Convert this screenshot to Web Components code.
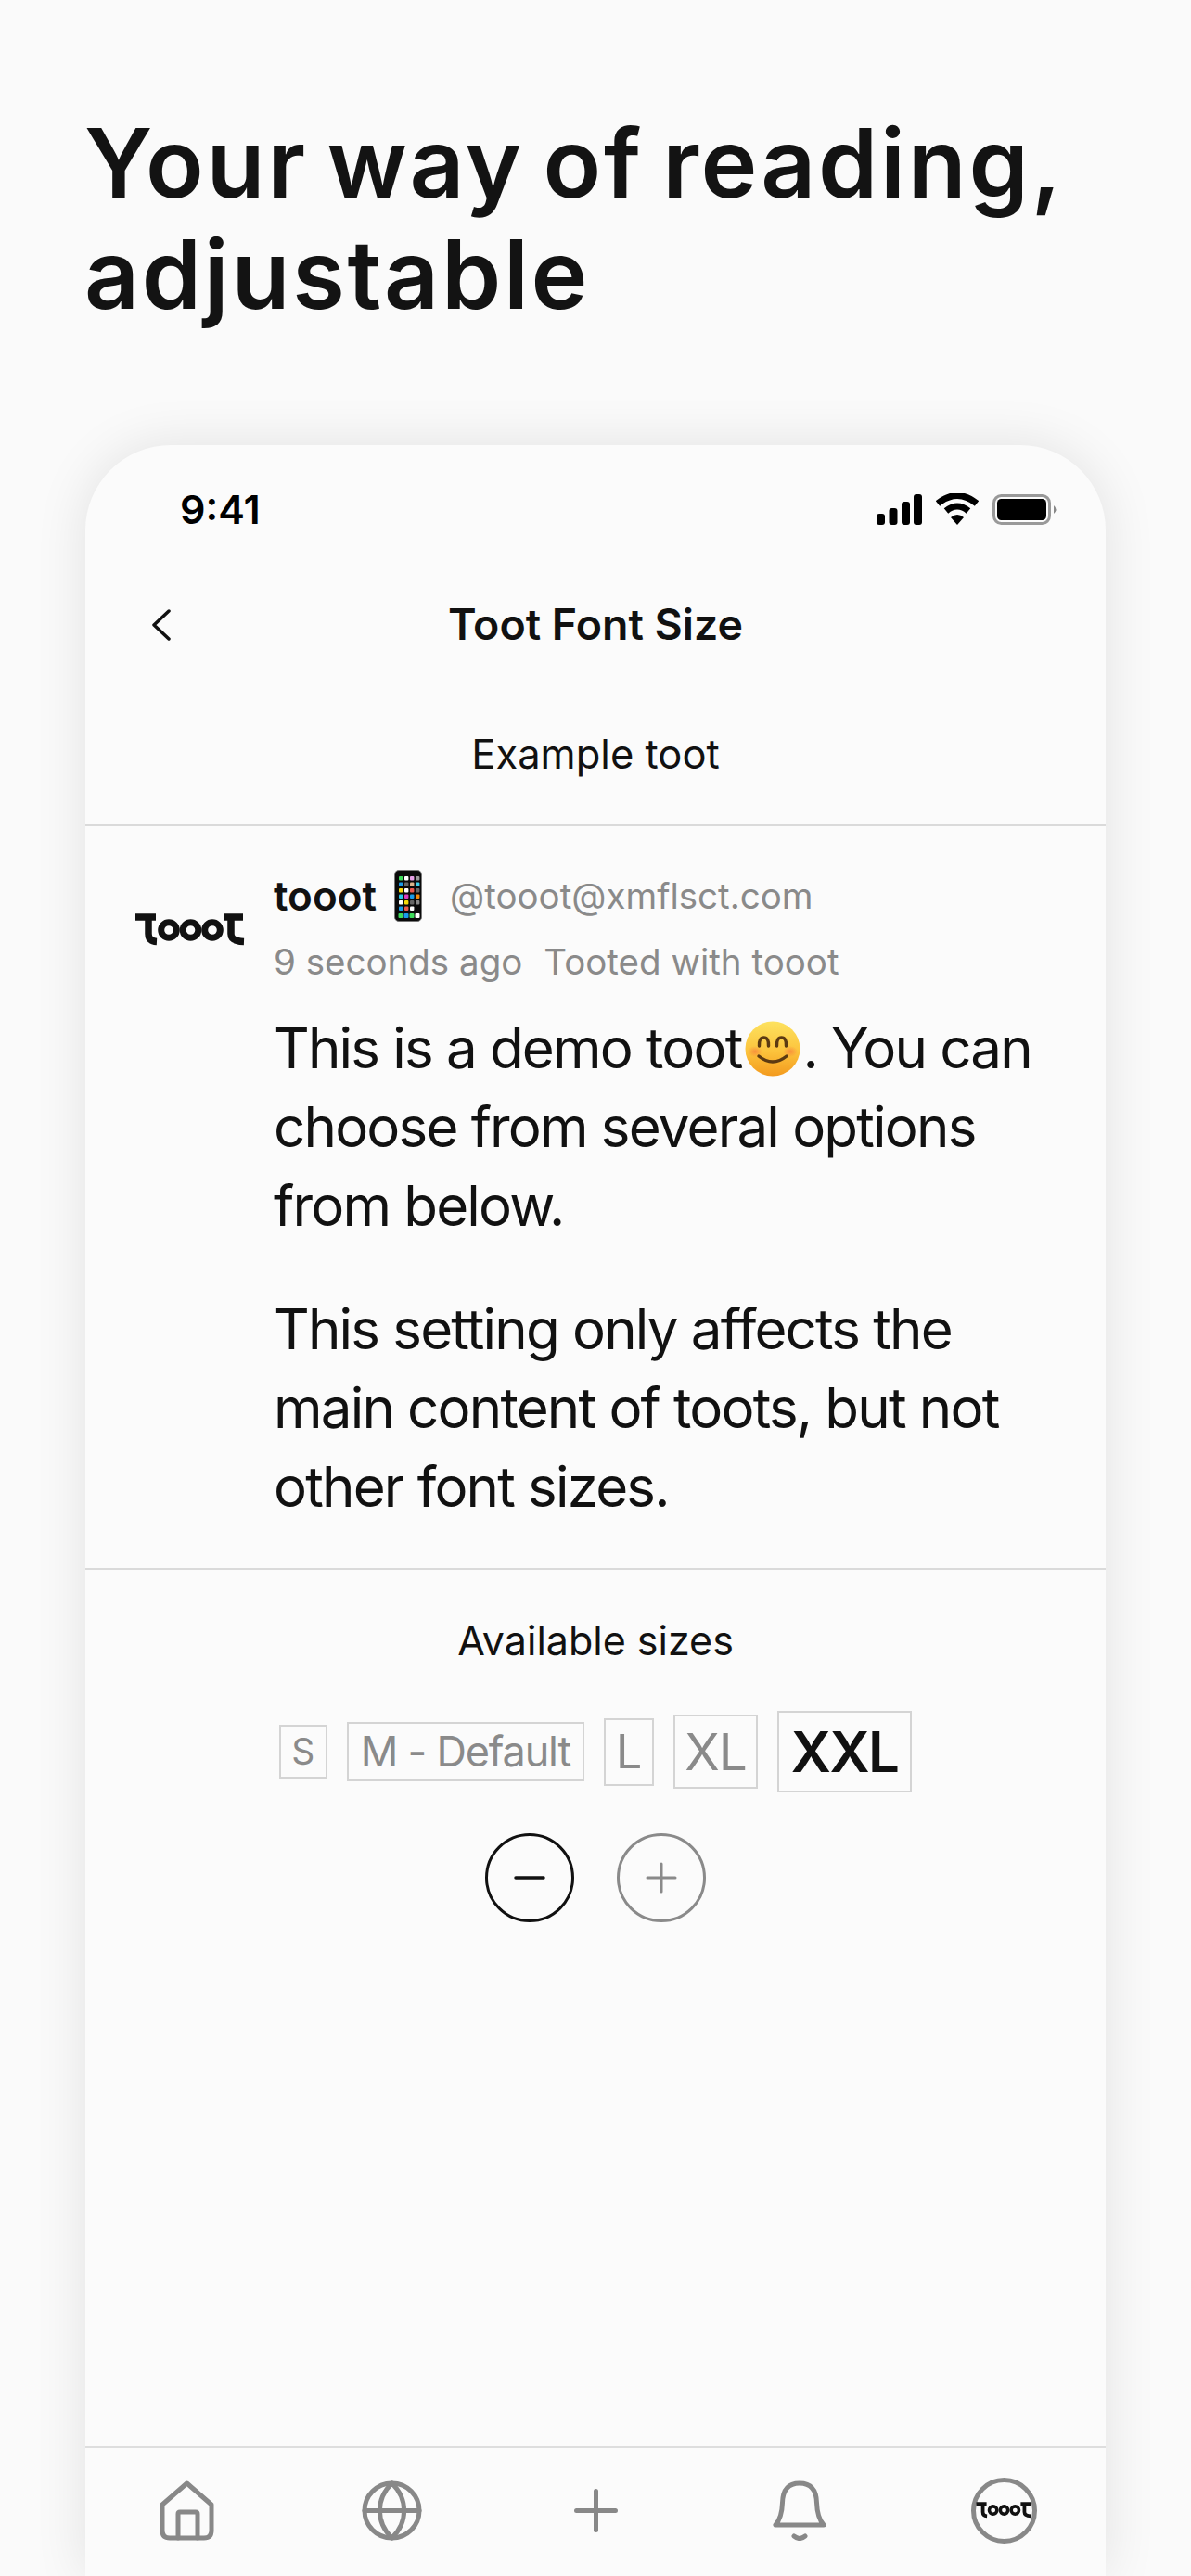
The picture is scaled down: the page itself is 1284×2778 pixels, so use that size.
<!DOCTYPE html>
<html lang="en">
<head>
<meta charset="utf-8">
<title>Toot Font Size</title>
<style>
    html, body {
        margin: 0;
        background: #fafafa;
    }
    body {
        width: 1284px;
        height: 2778px;
        overflow: hidden;
        font-family: Inter, "Liberation Sans", sans-serif;
        color: #111;
    }
</style>
</head>
<body>
<promo-heading>Your way of reading,<br>adjustable</promo-heading>
<phone-frame>
    <status-bar></status-bar>
    <nav-header>Toot Font Size</nav-header>
    <section-title>Example toot</section-title>
    <demo-toot>
        <p>This is a demo toot<smile-emoji></smile-emoji>. You can<br>choose from several options from below.</p>
        <p>This setting only affects the main content of toots, but not other font sizes.</p>
    </demo-toot>
    <section-title class="sizes">Available sizes</section-title>
    <size-picker>
        <size-chip size="s">S</size-chip>
        <size-chip size="m">M - Default</size-chip>
        <size-chip size="l">L</size-chip>
        <size-chip size="xl">XL</size-chip>
        <size-chip size="xxl" selected>XXL</size-chip>
    </size-picker>
    <size-stepper></size-stepper>
    <tab-bar></tab-bar>
</phone-frame>

<script>
// small helper, every element has the same shadow setup
function shadow(el, html) {
    const template = document.createElement('template');
    template.innerHTML = html;
    el.attachShadow({ mode: 'open' }).appendChild(template.content.cloneNode(true));
}

customElements.define('promo-heading', class extends HTMLElement {
    constructor() {
        super();
        shadow(this, `
<style>
    :host {
        display: block;
        height: 480px;
        box-sizing: border-box;
        padding: 116px 0 0 91px;
    }
    h1 {
        margin: 0;
        font: 600 103px/120px Inter, "Liberation Sans", sans-serif;
        letter-spacing: 2.7px;
        word-spacing: -8px;
        color: #131313;
    }
</style>
<h1><slot></slot></h1>`);
    }
});

customElements.define('phone-frame', class extends HTMLElement {
    constructor() {
        super();
        shadow(this, `
<style>
    :host {
        display: flex;
        flex-direction: column;
        width: 1100px;
        height: 2298px;
        margin-left: 92px;
        background: #fbfbfb;
        border-radius: 92px 92px 0 0;
        box-shadow: 0 0 56px rgba(0, 0, 0, 0.1);
    }
</style>
<slot></slot>`);
    }
});

customElements.define('status-bar', class extends HTMLElement {
    constructor() {
        super();
        shadow(this, `
<style>
    :host {
        display: flex;
        align-items: center;
        justify-content: space-between;
        height: 138px;
        padding: 0 51px 0 102px;
    }
    span {
        font: 600 43px/1 Inter, "Liberation Sans", sans-serif;
        color: #000;
    }
    div {
        display: flex;
        align-items: center;
        gap: 15px;
    }
    svg { display: block; }
</style>
<span>9:41</span>
<div>
    <svg width="49" height="33" viewBox="0 0 49 33">
        <rect x="0" y="21" width="9" height="12" rx="3"/>
        <rect x="13.5" y="15" width="9" height="18" rx="3"/>
        <rect x="27" y="8" width="9" height="25" rx="3"/>
        <rect x="40" y="0" width="9" height="33" rx="3"/>
    </svg>
    <svg width="46" height="34" viewBox="0 0 46 34">
        <path d="M2 11 Q23 -6 44 11" fill="none" stroke="#000" stroke-width="7"/>
        <path d="M11 19 Q23 9 35 19" fill="none" stroke="#000" stroke-width="7"/>
        <path d="M16 26 Q23 20 30 26 L23 34 Z"/>
    </svg>
    <svg width="71" height="33" viewBox="0 0 71 33">
        <rect x="1.5" y="1.5" width="60" height="30" rx="8" fill="none" stroke="#999" stroke-width="3"/>
        <rect x="5" y="5" width="53" height="23" rx="4.5"/>
        <path d="M66 12 Q71 16.5 66 21 Z" fill="#888"/>
    </svg>
</div>`);
    }
});

customElements.define('nav-header', class extends HTMLElement {
    constructor() {
        super();
        shadow(this, `
<style>
    :host {
        display: flex;
        align-items: center;
        justify-content: center;
        position: relative;
        height: 110px;
        font: 600 46.5px/1 Inter, "Liberation Sans", sans-serif;
        color: #111;
    }
    svg {
        position: absolute;
        left: 71px;
        top: 39px;
    }
</style>
<svg width="22" height="34" viewBox="0 0 22 34">
    <path d="M19 2 L3 17 L19 32" fill="none" stroke="#111" stroke-width="3.5" stroke-linecap="round" stroke-linejoin="round"/>
</svg>
<slot></slot>`);
    }
});

customElements.define('section-title', class extends HTMLElement {
    constructor() {
        super();
        shadow(this, `
<style>
    :host {
        display: block;
        padding: 55px 0 46px;
        text-align: center;
        font: 400 43.5px/60px Inter, "Liberation Sans", sans-serif;
        color: #111;
    }
    :host(.sizes) {
        padding: 46px 0 0;
        font-size: 43px;
    }
</style>
<slot></slot>`);
    }
});

customElements.define('toot-logo', class extends HTMLElement {
    constructor() {
        super();
        shadow(this, `
<style>
    :host { display: block; line-height: 0; }
    svg { width: 100%; height: auto; display: block; }
</style>
<svg viewBox="0 0 119 35" fill="none" stroke="#111" stroke-width="7.5">
    <path d="M1 4 H23 M15 4 V22 Q15 30 24 30.5"/>
    <circle cx="37" cy="18" r="8.3" stroke-width="7"/>
    <circle cx="60.5" cy="18" r="8.3" stroke-width="7"/>
    <circle cx="84" cy="18" r="8.3" stroke-width="7"/>
    <path d="M96 4 H117 M104 4 V22 Q104 30 118 30.5"/>
</svg>`);
    }
});

customElements.define('phone-emoji', class extends HTMLElement {
    constructor() {
        super();
        // icon rows as they are on the little home screen
        const rows = [
            ['#3ddc5a', '#fff', '#e6a0e6', '#999'],
            ['#1a9be8', '#666', '#d9b48c', '#3cd0ea'],
            ['#f5d90a', '#fff', '#ea5a4e', '#666'],
            ['#25c8e8', '#d93cc0', '#1a9be8', '#f58a0a'],
            ['#fff', '#f5d90a', '#666', '#888'],
            ['#1a9be8', '#ea5a4e', '#fff', null]
        ];
        let cells = '';
        rows.forEach((row, y) => row.forEach((c, x) => {
            if (c) cells += `<rect x="${5 + x * 6}" y="${7 + y * 6.5}" width="4.4" height="4.4" rx="1" fill="${c}"/>`;
        }));
        ['#3ddc5a', '#1a9be8', '#3ddc5a', '#fff'].forEach((c, x) => {
            cells += `<rect x="${4.5 + x * 6}" y="47" width="5" height="5" rx="1" fill="${c}"/>`;
        });
        shadow(this, `
<style>
    :host { display: inline-block; width: 30px; height: 56px; flex: none; }
    svg { display: block; }
</style>
<svg width="30" height="56" viewBox="0 0 30 56">
    <rect x="0.5" y="0.5" width="29" height="55" rx="4.5" fill="#0a0a0a" stroke="#777" stroke-width="1"/>
    ${cells}
</svg>`);
    }
});

customElements.define('smile-emoji', class extends HTMLElement {
    constructor() {
        super();
        shadow(this, `
<style>
    :host {
        display: inline-block;
        width: 66px;
        height: 60px;
        vertical-align: -9px;
    }
    svg { display: block; margin-left: 4px; }
</style>
<svg width="60" height="60" viewBox="0 0 60 60">
    <defs>
        <linearGradient id="face" x1="0" y1="0" x2="0" y2="1">
            <stop offset="0" stop-color="#fde25f"/>
            <stop offset="0.55" stop-color="#fcc33c"/>
            <stop offset="1" stop-color="#f39a1e"/>
        </linearGradient>
        <radialGradient id="blush">
            <stop offset="0" stop-color="#f6703c" stop-opacity="0.6"/>
            <stop offset="1" stop-color="#f6703c" stop-opacity="0"/>
        </radialGradient>
    </defs>
    <circle cx="30" cy="30" r="29.5" fill="url(#face)"/>
    <ellipse cx="11" cy="33" rx="8" ry="6" fill="url(#blush)"/>
    <ellipse cx="49" cy="33" rx="8" ry="6" fill="url(#blush)"/>
    <path d="M15.5 27 Q15 18 20.5 18 Q26 18 25.5 27" fill="none" stroke="#5c3a12" stroke-width="3.4" stroke-linecap="round"/>
    <path d="M34.5 27 Q34 18 39.5 18 Q45 18 44.5 27" fill="none" stroke="#5c3a12" stroke-width="3.4" stroke-linecap="round"/>
    <path d="M15 38 Q30 50 45 38" fill="none" stroke="#5c3a12" stroke-width="3.4" stroke-linecap="round"/>
</svg>`);
    }
});

customElements.define('demo-toot', class extends HTMLElement {
    constructor() {
        super();
        shadow(this, `
<style>
    :host {
        display: flex;
        border-top: 2px solid #dadada;
        border-bottom: 2px solid #dadada;
        padding: 45px 40px 45px 53px;
    }
    .avatar {
        width: 119px;
        margin: 49px 31px 0 0;
        flex: none;
    }
    .main {
        flex: 1;
        min-width: 0;
    }
    .name {
        display: flex;
        align-items: center;
        height: 60px;
        font: 400 38.5px/60px Inter, "Liberation Sans", sans-serif;
        color: #8a8a8a;
    }
    .name b {
        font-weight: 600;
        font-size: 44px;
        color: #111;
        margin-right: 19px;
    }
    .name span { margin-left: 30px; }
    .meta {
        display: flex;
        gap: 23px;
        margin: 11px 0 21px;
        font: 400 38.5px/60px Inter, "Liberation Sans", sans-serif;
        color: #8a8a8a;
    }
    .body {
        font: 400 60px/85px Inter, "Liberation Sans", sans-serif;
        letter-spacing: -1.8px;
        color: #111;
    }
    ::slotted(p) {
        margin: 0 0 48px;
    }
    ::slotted(p:last-child) {
        margin-bottom: 0;
    }
</style>
<toot-logo class="avatar"></toot-logo>
<div class="main">
    <div class="name"><b>tooot</b><phone-emoji></phone-emoji><span>@tooot@xmflsct.com</span></div>
    <div class="meta"><span>9 seconds ago</span><span>Tooted with tooot</span></div>
    <div class="body"><slot></slot></div>
</div>`);
    }
});

customElements.define('size-picker', class extends HTMLElement {
    constructor() {
        super();
        shadow(this, `
<style>
    :host {
        display: flex;
        align-items: center;
        justify-content: center;
        gap: 21px;
        height: 88px;
        margin-top: 46px;
    }
</style>
<slot></slot>`);
    }
});

customElements.define('size-chip', class extends HTMLElement {
    constructor() {
        super();
        shadow(this, `
<style>
    :host {
        display: block;
        box-sizing: border-box;
        border: 2px solid #d4d4d4;
        font-family: Inter, "Liberation Sans", sans-serif;
        color: #8a8a8a;
        text-align: center;
        white-space: nowrap;
    }
    :host([size="s"]) { height: 58px; padding: 0 11.5px; font-size: 39px; line-height: 54px; }
    :host([size="m"]) { height: 64px; padding: 0 13px; font-size: 45px; line-height: 60px; letter-spacing: -1.2px; }
    :host([size="l"]) { height: 73px; padding: 0 11px; font-size: 50px; line-height: 69px; }
    :host([size="xl"]) { height: 80px; padding: 0 10px; font-size: 55px; line-height: 76px; letter-spacing: -1px; }
    :host([size="xxl"]) { height: 88px; padding: 0 13px; font-size: 60px; line-height: 84px; letter-spacing: -1.6px; }
    :host([selected]) {
        color: #111;
        font-weight: 600;
    }
</style>
<slot></slot>`);
    }
});

customElements.define('size-stepper', class extends HTMLElement {
    constructor() {
        super();
        shadow(this, `
<style>
    :host {
        display: flex;
        justify-content: center;
        gap: 46px;
        margin-top: 44px;
    }
    svg { display: block; }
</style>
<svg width="96" height="96" viewBox="0 0 96 96" fill="none" stroke="#111">
    <circle cx="48" cy="48" r="46.5" stroke-width="3"/>
    <path d="M33 48 H63" stroke-width="3.5" stroke-linecap="round"/>
</svg>
<svg width="96" height="96" viewBox="0 0 96 96" fill="none" stroke="#8a8a8a">
    <circle cx="48" cy="48" r="46.5" stroke-width="3"/>
    <path d="M33 48 H63 M48 33 V63" stroke-width="3" stroke-linecap="round"/>
</svg>`);
    }
});

customElements.define('tab-bar', class extends HTMLElement {
    constructor() {
        super();
        shadow(this, `
<style>
    :host {
        display: grid;
        grid-template-columns: repeat(5, 1fr);
        align-items: center;
        height: 134px;
        padding-bottom: 4px;
        margin-top: auto;
        border-top: 2px solid #dedede;
    }
    div {
        display: flex;
        justify-content: center;
        align-items: center;
    }
    svg {
        display: block;
        fill: none;
        stroke: #888;
        stroke-width: 5;
        stroke-linecap: round;
        stroke-linejoin: round;
    }
    .me {
        box-sizing: border-box;
        width: 71px;
        height: 71px;
        border: 5px solid #888;
        border-radius: 50%;
    }
    toot-logo {
        flex: none;
        width: 60px;
    }
</style>
<div><svg width="60" height="65" viewBox="0 0 60 65">
    <path d="M29.5 3 L3 26 V54 Q3 62 11 62 H48 Q56 62 56 54 V26 Z"/>
    <path d="M20 62 V36 Q20 34 22 34 H39 Q41 34 41 36 V62"/>
</svg></div>
<div><svg width="65" height="65" viewBox="0 0 65 65">
    <circle cx="32.5" cy="32.5" r="29.5"/>
    <path d="M3 32.5 H62"/>
    <path d="M32.5 3 C50 20 50 45 32.5 62 C15 45 15 20 32.5 3 Z"/>
</svg></div>
<div><svg width="47" height="47" viewBox="0 0 47 47">
    <path d="M2.5 23.5 H44.5 M23.5 2.5 V44.5"/>
</svg></div>
<div><svg width="58" height="65" viewBox="0 0 58 65">
    <path d="M3 48 H55 Q48 40 47.5 24 Q47 3 29 3 Q11 3 10.5 24 Q10 40 3 48 Z"/>
    <path d="M23 60 Q29 65 35 60"/>
</svg></div>
<div><div class="me"><toot-logo></toot-logo></div></div>`);
    }
});
</script>
</body>
</html>
